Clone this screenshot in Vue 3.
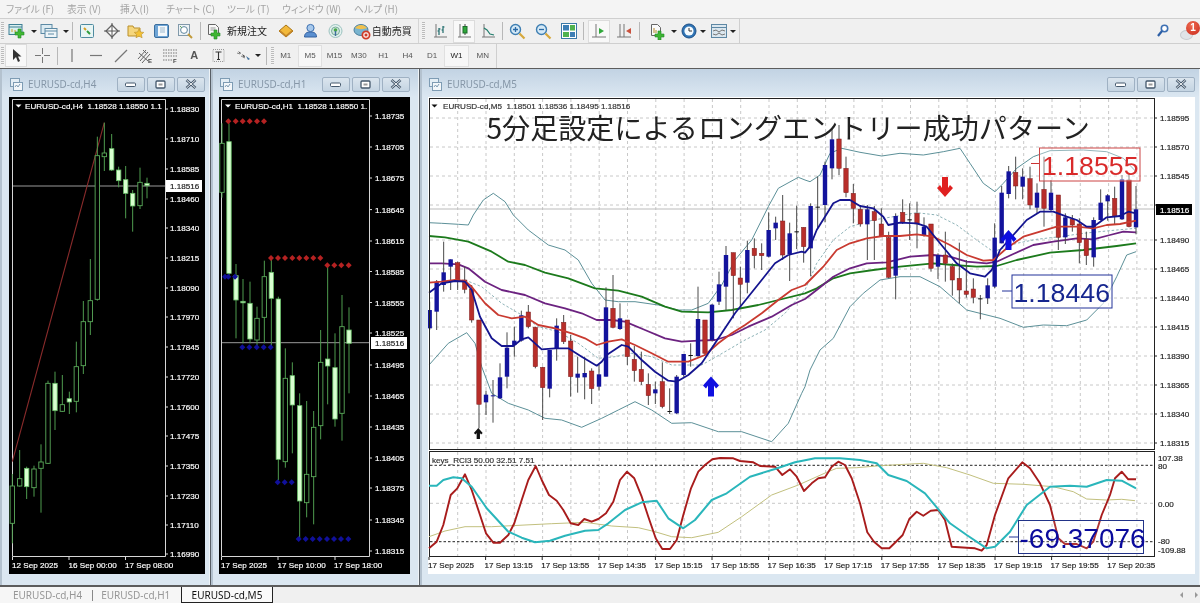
<script setup>
const conv = (ox, oy) => (a) => a.map(([x, y]) => [ox + x / 3, oy + y / 3])
const z8 = conv(425, 100), z9 = conv(800, 100), z10 = conv(425, 445), z11 = conv(810, 445)
const str = (a) => a.map(([x, y]) => x.toFixed(1) + ',' + y.toFixed(1)).join(' ')
const line = (a, b) => str(z8(a).concat(z9(b)))
const sub = (a, b) => str(z10(a).concat(z11(b)))

const blue = line([[12,578],[50,550],[90,543],[120,545],[140,570],[165,650],[200,715],[230,738],[265,738],[290,718],[310,712],[350,748],[390,745],[430,745],[470,770],[515,797],[530,785],[545,765],[590,735],[610,740],[650,780],[690,815],[730,842],[755,845],[790,825],[830,790],[860,745],[890,700],[930,640],[970,590],[1010,540],[1050,490],[1090,465],[1130,455]],
  [[15,458],[30,440],[50,390],[75,350],[100,310],[120,300],[150,300],[180,318],[220,325],[250,350],[265,375],[300,368],[350,370],[380,380],[420,430],[470,490],[510,520],[555,530],[575,510],[600,450],[640,405],[680,360],[720,335],[760,335],[800,350],[830,360],[860,380],[880,380],[920,352],[960,348],[985,335],[1008,340]])
const red = line([[12,548],[50,545],[90,540],[120,543],[140,560],[180,610],[220,645],[260,655],[300,650],[340,675],[390,685],[440,700],[480,715],[515,735],[550,725],[590,718],[630,735],[680,760],[730,785],[790,785],[840,765],[880,730],[920,700],[960,675],[1010,640],[1060,600],[1100,570],[1140,555]],
  [[30,540],[70,500],[110,450],[150,430],[200,415],[250,408],[300,408],[350,403],[400,410],[450,435],[500,465],[550,482],[580,480],[620,445],[670,410],[720,395],[770,380],[830,380],[880,385],[920,375],[960,372],[1008,362]])
const purple = line([[12,490],[50,490],[100,493],[130,505],[180,545],[230,570],[300,585],[360,610],[420,625],[470,640],[515,660],[560,660],[600,665],[660,690],[720,715],[770,725],[820,722],[870,720],[920,705],[970,680],[1040,650],[1100,615],[1140,597]],
  [[50,570],[100,530],[150,505],[200,490],[260,487],[330,470],[400,465],[450,470],[500,485],[560,490],[590,485],[640,462],[700,435],[760,425],[830,415],[880,418],[930,405],[970,395],[1008,397]])
const green = line([[12,408],[60,412],[130,425],[200,455],[250,485],[300,495],[360,518],[430,535],[510,565],[580,572],[650,590],[720,620],[770,635],[850,637],[920,630],[1000,615],[1060,600],[1140,580]],
  [[50,565],[100,535],[150,520],[220,510],[300,500],[400,490],[460,495],[530,500],[590,498],[650,480],[750,458],[850,450],[950,438],[1008,430]])
const upper = line([[12,368],[50,370],[100,373],[130,375],[145,345],[175,300],[205,280],[240,305],[265,345],[310,390],[370,435],[420,450],[460,480],[500,550],[540,600],[580,605],[630,605],[700,615],[760,630],[800,630],[850,610],[890,555],[930,480],[980,420],[1030,320],[1060,265],[1120,232],[1140,240]],
  [[30,245],[60,225],[90,160],[125,145],[180,157],[245,168],[300,160],[370,165],[430,155],[480,145],[510,190],[550,250],[585,275],[610,250],[650,205],[700,170],[750,152],[850,150],[920,155],[970,175],[1008,215]])
const lower = line([[12,795],[70,730],[125,698],[150,730],[170,800],[200,880],[250,910],[310,930],[360,955],[410,960],[470,982],[530,955],[580,930],[630,905],[680,930],[740,970],[800,968],[880,995],[950,995],[1040,1025],[1090,970],[1130,880],[1140,860]],
  [[30,810],[60,750],[100,715],[150,620],[190,580],[240,540],[300,530],[360,530],[420,560],[460,595],[500,630],[600,655],[670,682],[730,675],[800,677],[860,660],[910,610],[950,530],[980,465],[1008,455]])
const midband = line([[120,540],[170,560],[230,610],[290,645],[340,680],[400,695],[460,730],[520,775],[570,770],[620,760],[680,770],[740,795],[830,795],[900,755],[960,720],[1020,690],[1080,640],[1140,570]],
  [[50,490],[100,420],[150,380],[220,360],[280,350],[350,338],[410,345],[470,375],[530,420],[580,455],[650,430],[710,418],[780,410],[850,400],[950,390],[1008,385]])

const rciRed = sub([[12,310],[35,290],[55,240],[77,150],[97,130],[120,88],[140,135],[165,210],[183,265],[205,293],[225,293],[250,270],[268,235],[290,165],[310,105],[332,63],[350,105],[372,150],[395,167],[415,195],[437,235],[460,240],[478,222],[500,230],[520,222],[543,205],[565,170],[585,105],[606,80],[628,100],[650,155],[670,215],[692,280],[712,312],[735,312],[755,285],[775,210],[798,130],[820,80],[840,60],[862,43],[885,39],[925,40],[945,48],[985,52],[1005,63],[1050,65],[1072,90],[1095,73],[1115,95],[1137,138],[1160,115]],
  [[25,100],[45,97],[65,65],[85,50],[105,60],[125,100],[150,175],[172,262],[192,290],[215,310],[238,310],[258,290],[278,270],[298,222],[320,200],[340,212],[362,197],[385,195],[405,225],[425,305],[470,308],[495,310],[515,317],[530,300],[555,210],[595,100],[637,52],[660,70],[690,115],[720,180],[745,280],[765,297],[800,297],[830,310],[850,290],[875,210],[900,150],[915,100],[935,80],[955,103],[978,103]])
const rciTeal = sub([[12,122],[35,122],[55,105],[85,97],[110,100],[140,125],[185,190],[250,260],[290,278],[330,292],[375,287],[420,272],[480,257],[520,255],[550,235],[600,195],[650,172],[695,167],[730,220],[775,250],[810,225],[860,165],[905,145],[975,95],[1050,72],[1110,52]],
  [[15,40],[90,40],[150,45],[200,55],[235,90],[290,108],[345,145],[420,235],[470,270],[530,310],[555,305],[600,260],[650,180],[720,125],[780,122],[830,125],[890,105],[935,107],[978,130]])
const rciKhaki = sub([[12,275],[60,258],[120,245],[200,245],[300,240],[380,236],[480,232],[560,243],[640,248],[690,260],[740,275],[800,278],[880,262],[950,215],[1040,150],[1120,120]],
  [[50,82],[80,70],[140,68],[210,62],[340,55],[410,68],[480,90],[550,115],[640,118],[730,125],[790,140],[830,162],[890,165],[935,163],[975,167]])

// x, bodyTop, bodyBottom, high, low, kind
const c8 = [[14,630,685,605,690,'b'],[35,545,635,540,690,'b'],[56,517,555,425,575,'b'],[77,478,500,478,570,'b'],[98,488,540,485,570,'r'],[119,540,568,500,580,'r'],[140,568,660,555,668,'r'],[162,660,913,660,985,'r'],[183,884,907,872,945,'b'],[204,886,886,840,968,'b'],[225,832,895,790,897,'b'],[246,743,830,697,865,'b'],[268,722,735,680,770,'b'],[289,646,722,632,725,'b'],[310,636,680,615,685,'r'],[331,682,800,680,805,'r'],[353,802,863,800,960,'r'],[374,750,866,750,892,'b'],[395,677,745,655,782,'b'],[416,667,725,645,732,'r'],[437,723,830,705,890,'r'],[458,821,833,770,878,'b'],[479,819,832,770,898,'b'],[500,813,866,805,912,'r'],[522,823,860,795,872,'b'],[543,622,830,562,830,'b'],[564,625,682,525,685,'r'],[585,655,687,610,690,'b'],[607,660,770,660,795,'r'],[628,778,812,738,845,'r'],[649,808,845,755,855,'r'],[670,853,887,820,915,'r'],[691,868,880,845,912,'b'],[712,845,920,787,925,'r'],[734,933,933,865,942,'k'],[755,830,940,825,942,'b'],[776,762,825,762,830,'b'],[797,765,765,730,800,'k'],[819,657,768,560,772,'b'],[840,660,760,660,765,'r'],[861,614,720,612,724,'b'],[882,553,605,515,615,'b'],[903,465,560,438,630,'b'],[925,458,527,458,655,'r'],[946,534,553,500,620,'r'],[967,450,548,422,580,'b'],[988,445,467,415,505,'r'],[1010,460,467,430,510,'r'],[1031,390,470,337,472,'b'],[1052,368,385,350,420,'b'],[1073,363,465,285,480,'r'],[1094,400,462,368,543,'b'],[1115,394,394,317,447,'k'],[1136,382,440,382,488,'r']]
const c9 = [[32,318,445,310,528,'b'],[53,320,320,230,385,'k'],[75,195,315,185,367,'b'],[96,118,205,85,238,'b'],[117,117,205,75,225,'r'],[138,205,278,170,292,'r'],[160,280,325,252,370,'r'],[181,328,372,315,380,'r'],[202,328,373,315,480,'b'],[223,335,362,318,480,'r'],[244,372,408,325,410,'r'],[266,413,532,395,535,'r'],[287,348,527,340,598,'b'],[308,337,368,298,372,'r'],[329,358,358,310,420,'k'],[351,340,372,305,445,'r'],[372,380,405,352,410,'b'],[393,372,505,372,515,'r'],[414,465,500,460,537,'b'],[436,465,490,395,545,'r'],[457,500,540,490,587,'r'],[478,535,570,428,610,'r'],[499,573,583,480,593,'r'],[520,567,592,535,610,'r'],[541,595,595,585,658,'k'],[563,556,595,535,612,'b'],[584,413,560,370,565,'b'],[605,278,430,258,430,'b'],[626,214,282,198,295,'b'],[647,217,258,170,298,'r'],[668,230,260,205,298,'b'],[690,236,315,200,328,'r'],[711,278,323,250,342,'b'],[732,268,325,170,380,'r'],[753,278,330,240,335,'b'],[775,285,412,285,450,'r'],[796,352,412,340,432,'b'],[817,358,375,345,395,'r'],[838,372,428,355,490,'r'],[859,418,467,395,495,'r'],[881,360,472,352,500,'b'],[902,308,360,268,362,'b'],[923,286,304,282,362,'b'],[944,295,350,260,372,'r'],[966,238,358,225,360,'b'],[987,240,380,222,382,'r'],[1008,328,382,258,403,'b']]
const mk = (ox, oy) => (c) => {
  const top = oy + c[1] / 3, bot = oy + c[2] / 3
  return { x: ox + c[0] / 3, top, h: Math.max(bot - top, 1), hi: oy + c[3] / 3, lo: oy + c[4] / 3, k: c[5] }
}
const mainCandles = c8.map(mk(425, 100)).concat(c9.map(mk(800, 100)))

const y4 = (v) => 110 + v / 3, y5 = (v) => 350 + v / 3
const h4 = [[37,y5(408),y5(520),y5(372),y5(580),'h'],[59,y5(386),y5(408),y5(300),y5(410),'h'],[80,y5(355),y5(410),y5(350),y5(447),'s'],[102,y5(357),y5(413),y5(347),y5(440),'h'],[123,y5(336),y5(355),y5(283),y5(488),'h'],[144,y5(100),y5(340),y5(92),y5(342),'h'],[165,y5(100),y5(182),y5(65),y5(240),'s'],[187,y5(164),y5(184),y5(75),y5(186),'h'],[208,y5(146),y5(156),y5(125),y5(192),'s'],[229,y5(50),y5(154),y4(695),y5(187),'h'],[250,y4(635),y5(47),y4(573),y5(72),'h'],[271,y4(572),y4(635),y4(447),y4(675),'h'],[292,y4(137),y4(568),y4(80),y4(572),'h'],[313,y4(129),y4(140),y4(38),y4(183),'h'],[335,y4(116),y4(180),y4(72),y4(183),'s'],[356,y4(180),y4(212),y4(170),y4(232),'s'],[377,y4(209),y4(250),y4(168),y4(325),'s'],[398,y4(250),y4(288),y4(240),y4(365),'s'],[420,y4(217),y4(287),y4(173),y4(297),'h'],[441,y4(220),y4(227),y4(203),y4(265),'s']]
  .map((c) => ({ x: c[0] / 3, top: c[1], h: Math.max(c[2] - c[1], 1.5), hi: c[3], lo: c[4], k: c[5] }))
const h1 = [[36,y4(100),y4(247),y4(40),y4(263),'h'],[57,y4(95),y4(490),y4(40),y4(495),'s'],[78,y4(497),y4(570),y4(462),y4(685),'s'],[99,y4(574),y4(577),y4(507),y4(700),'s'],[120,y4(580),y4(687),y4(515),y4(700),'s'],[141,y4(625),y4(690),y4(590),y4(710),'h'],[163,y4(500),y4(622),y4(452),y4(700),'h'],[184,y4(487),y4(565),y4(450),y4(710),'s'],[205,y4(567),y5(328),y4(560),y5(390),'s'],[226,y5(85),y5(335),y4(715),y5(353),'h'],[247,y5(77),y5(165),y5(37),y5(310),'s'],[269,y5(167),y5(453),y5(130),y5(565),'s'],[290,y5(373),y5(458),y5(153),y5(502),'h'],[311,y5(232),y5(380),y5(183),y5(523),'h'],[332,y5(37),y5(227),y4(660),y5(268),'h'],[353,y5(27),y5(48),y4(470),y5(163),'s'],[375,y5(53),y5(207),y4(670),y5(230),'s'],[396,y4(650),y5(190),y4(555),y5(272),'h'],[417,y4(660),y4(700),y4(592),y5(130),'s']]
  .map((c) => ({ x: 210 + c[0] / 3, top: c[1], h: Math.max(c[2] - c[1], 1.5), hi: c[3], lo: c[4], k: c[5] }))
const dot = (xs, y) => xs.map((x) => ({ x: 210 + x / 3, y }))
const redDots = [...dot([55,77,98,119,141,162], y4(34)), ...dot([183,204,225,247,268,289,310,331], y4(444)), ...dot([352,373,394,416], y4(466))]
const blueDots = [...dot([45,55,75], y4(500)), ...dot([97,118,140,161,182], y4(712)), ...dot([203,224,245], y5(397)), ...dot([266,287,308,329,351,372,393,415], y5(567))]

const h4Prices = [['1.18830',109],['1.18710',139],['1.18585',169],['1.18460',199],['1.18340',228],['1.18215',258],['1.18090',288],['1.17970',317],['1.17845',347],['1.17720',377],['1.17600',407],['1.17475',436],['1.17350',466],['1.17230',496],['1.17110',525],['1.16990',554]]
const h1Prices = [['1.18735',116],['1.18705',147],['1.18675',178],['1.18645',209.6],['1.18615',241],['1.18585',271.5],['1.18555',302.5],['1.18525',333],['1.18495',365],['1.18465',396],['1.18435',427],['1.18405',458],['1.18375',488],['1.18345',520],['1.18315',551]]
const m5Prices = [['1.18595',118],['1.18570',147],['1.18545',176],['1.18490',240],['1.18465',269],['1.18440',298],['1.18415',327],['1.18390',356],['1.18365',385],['1.18340',414],['1.18315',443]]
const m5Grid = [147,176,205,240,269,298,327,356,385,414,443]
const subTimes = ['17 Sep 2025','17 Sep 13:15','17 Sep 13:55','17 Sep 14:35','17 Sep 15:15','17 Sep 15:55','17 Sep 16:35','17 Sep 17:15','17 Sep 17:55','17 Sep 18:35','17 Sep 19:15','17 Sep 19:55','17 Sep 20:35']
  .map((t, i) => ({ t, x: 429 + i * 56.6 }))
const vGrid = Array.from({ length: 25 }, (_, i) => 457.7 + i * 28.3)
const subLabels = [['107.38',458],['80',466],['0.00',504],['-80',541],['-109.88',550]]
const menus = ['ファイル (F)','表示 (V)','挿入(I)','チャート (C)','ツール (T)','ウィンドウ (W)','ヘルプ (H)']
</script>

<template>
  <div class="app">
    <nav class="menu"><span v-for="m in menus" :key="m">{{ m }}</span></nav>

    <div class="row row1">
      <div class="bar bar-a">
        <i class="grip"></i>
        <span class="b dd">
          <svg width="20" height="17" viewBox="0 0 20 17"><rect x="1" y="1.5" width="13" height="10" fill="#d9f0ef" stroke="#3f7f95"/><path d="M1 4h13" stroke="#3f7f95"/><path d="M4 9V6M7 9V7" stroke="#d8a021"/><path d="M10 6h3v3h3v3h-3v3h-3v-3H7V9h3z" fill="#42b833" stroke="#1f8a2a" stroke-width=".6"/></svg>
          <i class="drop"></i>
        </span>
        <span class="b dd">
          <svg width="20" height="17" viewBox="0 0 20 17"><rect x="1" y="1.5" width="11" height="9" fill="#dcebf2" stroke="#5c8aa5"/><rect x="5" y="5.5" width="12" height="9" fill="#eef5f8" stroke="#5c8aa5"/><path d="M5 8h12M8 11h6" stroke="#5c8aa5"/></svg>
          <i class="drop"></i>
        </span>
        <i class="sep"></i>
        <span class="b"><svg width="16" height="16" viewBox="0 0 16 16"><rect x="1.5" y="1.5" width="13" height="13" rx="1" fill="#e8f5f4" stroke="#4e8ba0"/><path d="M5 5l2 2" stroke="#d8a021" stroke-width="2"/><path d="M8 8l3 3" stroke="#2e9c3c" stroke-width="2"/></svg></span>
        <span class="b"><svg width="16" height="16" viewBox="0 0 16 16"><path d="M8 2l6 6-6 6-6-6z" fill="#fff" stroke="#666" stroke-width="1.3"/><path d="M8 0v16M0 8h16" stroke="#555"/></svg></span>
        <span class="b"><svg width="18" height="16" viewBox="0 0 18 16"><path d="M1 3h5l1 2h6v8H1z" fill="#f5d67d" stroke="#b98f2a"/><path d="M12 6l1.5 3 3.3.4-2.4 2.2.7 3.2-3.1-1.7-3 1.7.7-3.2-2.4-2.2 3.3-.4z" fill="#f4c235" stroke="#b98f2a" stroke-width=".6"/></svg></span>
        <span class="b"><svg width="17" height="16" viewBox="0 0 17 16"><rect x="1.5" y="1.5" width="14" height="13" rx="1.5" fill="#6fa5d6" stroke="#3b6f9f"/><rect x="5" y="3" width="9" height="10" fill="#f4f8fb"/><path d="M7 5h5M7 7h5M7 9h5" stroke="#9db9cf"/></svg></span>
        <span class="b"><svg width="17" height="16" viewBox="0 0 17 16"><rect x="1.5" y="1.5" width="11" height="11" fill="#eef3f6" stroke="#8199aa"/><circle cx="7" cy="7" r="3.4" fill="#fff" stroke="#5e86a0"/><path d="M11 11l4 4" stroke="#c29a3a" stroke-width="2"/><path d="M3 3l2 2" stroke="#5fa75f"/></svg></span>
        <i class="sep"></i>
        <span class="tb">
          <svg width="17" height="17" viewBox="0 0 17 17"><path d="M2.5 1.5h7l3 3v7h-10z" fill="#f8f8f8" stroke="#666"/><path d="M4.5 5h5M4.5 7h5" stroke="#999"/><path d="M8 7h3v3h3v3h-3v3H8v-3H5v-3h3z" fill="#3fb533" stroke="#1f8a2a" stroke-width=".6"/></svg>
          新規注文
        </span>
        <span class="b"><svg width="16" height="16" viewBox="0 0 16 16"><path d="M8 2l7 6-7 6-7-6z" fill="#f2b93b" stroke="#a87416"/><path d="M1 8l7 6 7-6-1-1-6 5-6-5z" fill="#c4862a"/></svg></span>
        <span class="b"><svg width="15" height="16" viewBox="0 0 15 16"><circle cx="7.5" cy="5" r="3.6" fill="#a8c9ec" stroke="#3b6fb0"/><path d="M1.5 14c0-4 2.5-5 6-5s6 1 6 5z" fill="#5a8fd0" stroke="#33609f"/></svg></span>
        <span class="b"><svg width="15" height="16" viewBox="0 0 15 16"><circle cx="7.5" cy="8" r="6.5" fill="#e3f1ee" stroke="#9cc3c0"/><circle cx="7.5" cy="8" r="4" fill="#cfe6dd" stroke="#79ad9a"/><circle cx="7.5" cy="7" r="1.8" fill="#4aa84a"/><path d="M7.5 8v5" stroke="#3e6e9e" stroke-width="1.4"/></svg></span>
        <span class="tb tb2">
          <svg width="18" height="17" viewBox="0 0 18 17"><ellipse cx="8" cy="7" rx="7" ry="5.5" fill="#79b4cf" stroke="#4d7f9c"/><path d="M2 5c3-4 9-4 12 0-3 1.5-9 1.5-12 0z" fill="#f1c14d"/><circle cx="13" cy="12" r="3.6" fill="#fff" stroke="#cf3b27" stroke-width="1.8"/><rect x="11.6" y="10.6" width="2.8" height="2.8" fill="#cf3b27"/></svg>
          自動売買
        </span>
      </div>
      <div class="bar bar-b">
        <i class="grip gr2"></i>
        <span class="b b-w"><svg width="15" height="16" viewBox="0 0 15 16"><path d="M1 14h13M3 1v13" stroke="#777"/><path d="M6 5v7M4.5 8H6M6 6h1.5M10 3v7M8.5 7H10M10 4h1.5" stroke="#1f6b6b" stroke-width="1.2"/></svg></span>
        <span class="b b-on"><svg width="15" height="16" viewBox="0 0 15 16"><path d="M1 14h13M3 1v13" stroke="#777"/><path d="M8 1v11" stroke="#444"/><rect x="6" y="3.5" width="4" height="6.5" fill="#2fa83a" stroke="#1c6b2a"/></svg></span>
        <span class="b b-w"><svg width="15" height="16" viewBox="0 0 15 16"><path d="M1 14h13M3 1v13" stroke="#777"/><path d="M3 5l3 2 3 4 4 1" fill="none" stroke="#1f7c6b" stroke-width="1.2"/></svg></span>
        <i class="sep"></i>
        <span class="b b-z"><svg width="17" height="17" viewBox="0 0 17 17"><circle cx="6.5" cy="6.5" r="5" fill="#d5e9f6" stroke="#3f7fb2" stroke-width="1.4"/><path d="M4 6.5h5M6.5 4v5" stroke="#2a6ba8" stroke-width="1.3"/><path d="M10.5 10.5l5 5" stroke="#d6a83c" stroke-width="2.2"/></svg></span>
        <span class="b b-z"><svg width="17" height="17" viewBox="0 0 17 17"><circle cx="6.5" cy="6.5" r="5" fill="#d5e9f6" stroke="#3f7fb2" stroke-width="1.4"/><path d="M4 6.5h5" stroke="#2a6ba8" stroke-width="1.3"/><path d="M10.5 10.5l5 5" stroke="#d6a83c" stroke-width="2.2"/></svg></span>
        <span class="b b-z"><svg width="16" height="16" viewBox="0 0 16 16"><rect x=".5" y=".5" width="15" height="15" fill="#fff" stroke="#3b7aa8"/><rect x="2" y="2" width="6" height="5.5" fill="#3d7fb5"/><rect x="9" y="2" width="5" height="5.5" fill="#4fb24f"/><rect x="2" y="9" width="6" height="5" fill="#4fb24f"/><rect x="9" y="9" width="5" height="5" fill="#3d7fb5"/></svg></span>
        <i class="sep"></i>
        <span class="b b-on b-n"><svg width="15" height="16" viewBox="0 0 15 16"><path d="M0 14h14M4 1v13" stroke="#777"/><path d="M7 5l5 3-5 3z" fill="#2fa83a"/></svg></span>
        <span class="b b-s"><svg width="15" height="16" viewBox="0 0 15 16"><path d="M0 14h14M3 1v13M7 1v13" stroke="#777"/><path d="M14 5l-5 3 5 3z" fill="#c9503c"/></svg></span>
        <i class="sep"></i>
        <span class="b dd d2">
          <svg width="19" height="17" viewBox="0 0 19 17"><path d="M2.5 1.5h6l3 3v8h-9z" fill="#fafafa" stroke="#666"/><path d="M5 5v5M7 7v3" stroke="#b58a2a"/><path d="M9 8h3v3h3v3h-3v3H9v-3H6v-3h3z" fill="#3fb533" stroke="#1f8a2a" stroke-width=".6"/></svg>
          <i class="drop"></i>
        </span>
        <span class="b dd d3">
          <svg width="16" height="16" viewBox="0 0 16 16"><circle cx="8" cy="8" r="7" fill="#2f74b5" stroke="#1d4f86"/><circle cx="8" cy="8" r="4.6" fill="#f5fbff"/><path d="M8 5v3h3" stroke="#333" fill="none"/></svg>
          <i class="drop"></i>
        </span>
        <span class="b dd d4">
          <svg width="16" height="14" viewBox="0 0 16 14"><rect x=".5" y=".5" width="15" height="13" fill="#dbe7ef" stroke="#5d87a4"/><path d="M.5 3.5h15" stroke="#5d87a4"/><path d="M2 7l3-1 3 2 3-2 3 1M2 10l3 1 3-2 3 2 3-1" fill="none" stroke="#777"/></svg>
          <i class="drop"></i>
        </span>
      </div>
      <div class="notify">
        <svg width="12" height="14" viewBox="0 0 12 14"><circle cx="7.5" cy="4.5" r="3.2" fill="#fff" stroke="#3d70b3" stroke-width="1.6"/><path d="M5 7l-4 5" stroke="#2d5fa6" stroke-width="2.2"/></svg>
        <span class="bubble"><i class="cloud"></i><b>1</b></span>
      </div>
    </div>

    <div class="row row2">
      <i class="grip"></i>
      <span class="b b-on cur"><svg width="11" height="15" viewBox="0 0 11 15"><path d="M2 1v11l3-3 2 5 2-1-2-4.5h3.500z" fill="#333"/></svg></span>
      <span class="b b-m"><svg width="15" height="15" viewBox="0 0 15 15"><path d="M7.500 0v6M7.500 9v6M0 7.500h6M9 7.500h6" stroke="#777"/></svg></span>
      <i class="sep"></i>
      <span class="b b-m"><svg width="14" height="15" viewBox="0 0 14 15"><path d="M7 1v13" stroke="#777" stroke-width="1.2"/></svg></span>
      <span class="b b-m"><svg width="14" height="15" viewBox="0 0 14 15"><path d="M1 7.500h12" stroke="#777" stroke-width="1.2"/></svg></span>
      <span class="b b-m"><svg width="14" height="15" viewBox="0 0 14 15"><path d="M1 14L13 2" stroke="#777" stroke-width="1.2"/></svg></span>
      <span class="b b-m"><svg width="16" height="16" viewBox="0 0 16 16"><path d="M1 11l8-9M3 13l8-9M5 15l8-9M2 5l9 8M6 2l3 3" stroke="#666"/><text x="11" y="15" class="tiny">E</text></svg></span>
      <span class="b b-m"><svg width="16" height="16" viewBox="0 0 16 16"><path d="M1 2h14M1 5h14M1 8h14M1 12h9" stroke="#777" stroke-dasharray="1.500 1"/><text x="11" y="15" class="tiny">F</text></svg></span>
      <span class="b b-m ltr">A</span>
      <span class="b b-m"><svg width="13" height="15" viewBox="0 0 13 15"><rect x="1" y="1.500" width="11" height="12" fill="none" stroke="#999" stroke-dasharray="1 1"/><path d="M3.500 4h6M6.500 4v7.500M5 11.500h3" stroke="#333" stroke-width="1.100"/></svg></span>
      <span class="b dd d5">
        <svg width="16" height="13" viewBox="0 0 16 13"><path d="M2 2l3 2-1 1zM6 5l3 2-1 2z" fill="#444"/><path d="M10 7l4 3-2 1z" fill="#3f6f9c"/><path d="M1 4l3 1M5 7l4 2" stroke="#888"/></svg>
        <i class="drop"></i>
      </span>
      <i class="sep s2"></i>
      <i class="grip gr3"></i>
      <span class="tf">M1</span><span class="tf on">M5</span><span class="tf">M15</span><span class="tf">M30</span><span class="tf">H1</span><span class="tf">H4</span><span class="tf">D1</span><span class="tf on dk">W1</span><span class="tf mn">MN</span>
    </div>

    <main class="mdi">
      <section class="win w1">
        <header class="title">
          <svg class="wi" width="13" height="13" viewBox="0 0 13 13"><rect x=".5" y=".5" width="9" height="8" fill="#e4eef5" stroke="#7e9cb4"/><rect x="3.500" y="4.500" width="9" height="8" fill="#f3f7fa" stroke="#7e9cb4"/><path d="M5 9l1.500-2 1.500 2 2-3" stroke="#7e9cb4" fill="none"/></svg>
          <span class="tt">EURUSD-cd,H4</span>
          <span class="wb"><svg width="12" height="8" viewBox="0 0 12 8"><rect x=".5" y="3" width="10" height="3.500" rx="1" fill="#fff" stroke="#44586c"/></svg></span>
          <span class="wb"><svg width="12" height="9" viewBox="0 0 12 9"><rect x="1" y="1" width="9" height="7" rx="1" fill="#fff" stroke="#44586c" stroke-width="1.300"/><rect x="3.500" y="3.500" width="4" height="2" fill="#999"/></svg></span>
          <span class="wb"><svg width="12" height="10" viewBox="0 0 12 10"><path d="M1.500 1l9 8M10.500 1l-9 8" stroke="#44586c" stroke-width="2.600"/><path d="M1.500 1l9 8M10.500 1l-9 8" stroke="#fff" stroke-width=".9"/></svg></span>
        </header>
        <svg class="chart" width="196" height="477" viewBox="9 97 196 477">
          <rect x="9" y="97" width="196" height="477" fill="#000"/>
          <path d="M12.500 99.500H165.500V556.500H12.500Z" fill="none" stroke="#eee" stroke-width=".9"/>
          <line x1="13" y1="186" x2="165" y2="186" stroke="#9a9a9a"/>
          <line x1="12.300" y1="461.700" x2="104.300" y2="122.700" stroke="#8a2b2b" stroke-width="1.100"/>
          <g v-for="c in h4" :key="c.x">
            <line :x1="c.x" :x2="c.x" :y1="c.hi" :y2="c.lo" class="gw"/>
            <rect :x="c.x - 2.2" :y="c.top" width="4.400" :height="c.h" :class="c.k === 's' ? 'gs' : 'gh'"/>
          </g>
          <g v-for="p in h4Prices" :key="p[0]">
            <line x1="165" x2="168" :y1="p[1]" :y2="p[1]" stroke="#ddd"/>
            <text x="170" :y="p[1] + 3" class="t w">{{ p[0] }}</text>
          </g>
          <rect x="166" y="180" width="36" height="12" fill="#fff"/>
          <text x="170" y="189" class="t k">1.18516</text>
          <path d="M15.500 104.500h6l-3 3z" fill="#fff"/>
          <text x="25" y="109" class="t w">EURUSD-cd,H4&nbsp;&nbsp;1.18528 1.18550 1.1</text>
          <path d="M12.500 557v3M69 557v3M125.500 557v3" stroke="#ddd"/>
          <text x="12" y="568" class="t w">12 Sep 2025</text>
          <text x="68.500" y="568" class="t w">16 Sep 00:00</text>
          <text x="125" y="568" class="t w">17 Sep 08:00</text>
        </svg>
      </section>

      <section class="win w2">
        <header class="title">
          <svg class="wi" width="13" height="13" viewBox="0 0 13 13"><rect x=".5" y=".5" width="9" height="8" fill="#e4eef5" stroke="#7e9cb4"/><rect x="3.500" y="4.500" width="9" height="8" fill="#f3f7fa" stroke="#7e9cb4"/><path d="M5 9l1.500-2 1.500 2 2-3" stroke="#7e9cb4" fill="none"/></svg>
          <span class="tt">EURUSD-cd,H1</span>
          <span class="wb"><svg width="12" height="8" viewBox="0 0 12 8"><rect x=".5" y="3" width="10" height="3.500" rx="1" fill="#fff" stroke="#44586c"/></svg></span>
          <span class="wb"><svg width="12" height="9" viewBox="0 0 12 9"><rect x="1" y="1" width="9" height="7" rx="1" fill="#fff" stroke="#44586c" stroke-width="1.300"/><rect x="3.500" y="3.500" width="4" height="2" fill="#999"/></svg></span>
          <span class="wb"><svg width="12" height="10" viewBox="0 0 12 10"><path d="M1.500 1l9 8M10.500 1l-9 8" stroke="#44586c" stroke-width="2.600"/><path d="M1.500 1l9 8M10.500 1l-9 8" stroke="#fff" stroke-width=".9"/></svg></span>
        </header>
        <svg class="chart" width="191" height="477" viewBox="219 97 191 477">
          <rect x="219" y="97" width="191" height="477" fill="#000"/>
          <path d="M221.500 99.500H369.500V556.500H221.500Z" fill="none" stroke="#eee" stroke-width=".9"/>
          <line x1="222" y1="342.700" x2="369" y2="342.700" stroke="#9a9a9a"/>
          <g v-for="c in h1" :key="c.x">
            <line :x1="c.x" :x2="c.x" :y1="c.hi" :y2="c.lo" class="gw"/>
            <rect :x="c.x - 2.2" :y="c.top" width="4.400" :height="c.h" :class="c.k === 's' ? 'gs' : 'gh'"/>
          </g>
          <path v-for="d in redDots" :key="'r' + d.x + d.y" :d="`M${d.x} ${d.y - 3}l3 3-3 3-3-3z`" fill="#b52222"/>
          <path v-for="d in blueDots" :key="'b' + d.x + d.y" :d="`M${d.x} ${d.y - 3}l3 3-3 3-3-3z`" fill="#10109a"/>
          <g v-for="p in h1Prices" :key="p[0]">
            <line x1="369" x2="372" :y1="p[1]" :y2="p[1]" stroke="#ddd"/>
            <text x="375" :y="p[1] + 3" class="t w">{{ p[0] }}</text>
          </g>
          <rect x="371" y="337" width="36" height="12" fill="#fff"/>
          <text x="375" y="346" class="t k">1.18516</text>
          <path d="M225 104.500h6l-3 3z" fill="#fff"/>
          <text x="235" y="109" class="t w">EURUSD-cd,H1&nbsp;&nbsp;1.18528 1.18550 1.</text>
          <path d="M221.500 557v3M278 557v3M335 557v3" stroke="#ddd"/>
          <text x="221" y="568" class="t w">17 Sep 2025</text>
          <text x="277.500" y="568" class="t w">17 Sep 10:00</text>
          <text x="334" y="568" class="t w">17 Sep 18:00</text>
        </svg>
      </section>

      <section class="win w3">
        <header class="title">
          <svg class="wi" width="13" height="13" viewBox="0 0 13 13"><rect x=".5" y=".5" width="9" height="8" fill="#e4eef5" stroke="#7e9cb4"/><rect x="3.500" y="4.500" width="9" height="8" fill="#f3f7fa" stroke="#7e9cb4"/><path d="M5 9l1.500-2 1.500 2 2-3" stroke="#7e9cb4" fill="none"/></svg>
          <span class="tt">EURUSD-cd,M5</span>
          <span class="wb"><svg width="12" height="8" viewBox="0 0 12 8"><rect x=".5" y="3" width="10" height="3.500" rx="1" fill="#fff" stroke="#44586c"/></svg></span>
          <span class="wb"><svg width="12" height="9" viewBox="0 0 12 9"><rect x="1" y="1" width="9" height="7" rx="1" fill="#fff" stroke="#44586c" stroke-width="1.300"/><rect x="3.500" y="3.500" width="4" height="2" fill="#999"/></svg></span>
          <span class="wb"><svg width="12" height="10" viewBox="0 0 12 10"><path d="M1.500 1l9 8M10.500 1l-9 8" stroke="#44586c" stroke-width="2.600"/><path d="M1.500 1l9 8M10.500 1l-9 8" stroke="#fff" stroke-width=".9"/></svg></span>
        </header>
        <svg class="chart" width="767" height="477" viewBox="428 97 767 477">
          <rect x="428" y="97" width="767" height="477" fill="#fff"/>
          <line v-for="x in vGrid" :key="'v' + x" :x1="x" :x2="x" y1="99" y2="449" class="grid"/>
          <line v-for="y in m5Grid" :key="'h' + y" x1="430" x2="1154" :y1="y" :y2="y" class="grid"/>
          <line x1="430" x2="1154" y1="118" y2="118" class="grid"/>
          <line x1="430" x2="1154" y1="209" y2="209" stroke="#bbb"/>
          <polyline :points="upper" class="band"/>
          <polyline :points="lower" class="band"/>
          <polyline :points="midband" class="band mid"/>
          <polyline :points="green" class="ma" stroke="#1c7a1c"/>
          <polyline :points="purple" class="ma" stroke="#6c2280"/>
          <g v-for="c in mainCandles" :key="c.x">
            <line :x1="c.x" :x2="c.x" :y1="c.hi" :y2="c.lo" class="cw"/>
            <rect :x="c.x - 2.2" :y="c.top" width="4.400" :height="c.h" :class="'c' + c.k"/>
          </g>
          <polyline :points="red" class="ma" stroke="#c93a30"/>
          <polyline :points="blue" class="ma" stroke="#14148f"/>
          <polygon points="0,-10 8,-1 5,2 3,-1 3,10 -3,10 -3,-1 -5,2 -8,-1" transform="translate(711 386.5)" fill="#0f0fe0"/>
          <polygon points="0,-10 8,-1 5,2 3,-1 3,10 -3,10 -3,-1 -5,2 -8,-1" transform="translate(1008.5 240)" fill="#0f0fe0"/>
          <polygon points="0,-10 8,-1 5,2 3,-1 3,10 -3,10 -3,-1 -5,2 -8,-1" transform="translate(945 187) scale(1 -1)" fill="#e02020"/>
          <polygon points="0,-10 8,-1 5,2 3,-1 3,10 -3,10 -3,-1 -5,2 -8,-1" transform="translate(478.3 433.5) scale(.55)" fill="#111"/>
          <rect x="429.500" y="98.500" width="725" height="351" fill="none" stroke="#222"/>
          <rect x="429.500" y="451.500" width="725" height="105" fill="none" stroke="#222"/>
          <g v-for="p in m5Prices" :key="p[0]">
            <line x1="1154" x2="1157" :y1="p[1]" :y2="p[1]" stroke="#222"/>
            <text x="1160" :y="p[1] + 3" class="t k">{{ p[0] }}</text>
          </g>
          <line x1="1154" x2="1157" y1="205" y2="205" stroke="#222"/>
          <rect x="1156" y="204" width="36" height="11" fill="#000"/>
          <text x="1160" y="212.500" class="t w">1.18516</text>
          <path d="M431.500 104.500h6l-3 3z" fill="#111"/>
          <text x="443" y="109" class="t dk">EURUSD-cd,M5&nbsp;&nbsp;1.18501 1.18536 1.18495 1.18516</text>
          <text x="486.500" y="138.500" class="headline">5分足設定によるロングエントリー成功パターン</text>

          <path d="M1031 163.500h8" stroke="#c33"/>
          <rect x="1039.500" y="148" width="100.500" height="33" fill="#fff" fill-opacity=".35" stroke="#c44"/>
          <text x="1042" y="175" class="lab lr">1.18555</text>
          <path d="M1002 291h10" stroke="#223399"/>
          <rect x="1012" y="275" width="100" height="33" fill="#fff" fill-opacity=".6" stroke="#223399"/>
          <text x="1013.500" y="301.500" class="lab lb">1.18446</text>

          <line v-for="x in vGrid" :key="'sv' + x" :x1="x" :x2="x" y1="452" y2="556" class="grid"/>
          <line x1="430" x2="1154" y1="503.300" y2="503.300" class="grid"/>
          <line x1="430" x2="1154" y1="465.300" y2="465.300" class="lvl"/>
          <line x1="430" x2="1154" y1="541.700" y2="541.700" class="lvl"/>
          <polyline :points="rciKhaki" class="rk"/>
          <polyline :points="rciRed" class="rr"/>
          <polyline :points="rciTeal" class="rt"/>
          <text x="432" y="463" class="t dk">keys_RCI3 50.00 32.51 7.51</text>
          <g v-for="p in subLabels" :key="p[0]">
            <text x="1158" :y="p[1] + 3" class="t k">{{ p[0] }}</text>
          </g>
          <path d="M1009 537h9" stroke="#223399"/>
          <rect x="1018.500" y="520.500" width="125" height="33" fill="#fff" fill-opacity=".1" stroke="#223388"/>
          <text x="1019.500" y="548" class="lab ln">-69.37076</text>

          <g v-for="s in subTimes" :key="s.t">
            <line :x1="s.x" :x2="s.x" y1="557" y2="560" stroke="#222"/>
            <text :x="s.x - 1" y="568" class="t k">{{ s.t }}</text>
          </g>
        </svg>
      </section>
    </main>

    <footer class="tabs">
      <div class="tab-list">
        <span class="tab">EURUSD-cd,H4</span><i class="tab-sep"></i><span class="tab">EURUSD-cd,H1</span>
      </div>
      <span class="tab active">EURUSD-cd,M5</span>
      <span class="scroll"><i class="ar al"></i><i class="ar arr"></i></span>
    </footer>
  </div>
</template>

<style>
html, body { margin: 0; padding: 0; background: #f0f0f0; overflow: hidden; }
</style>

<style scoped>
.app { width: 1200px; height: 603px; overflow: hidden; display: flex; flex-direction: column; background: #f0f0f0; font-family: "Liberation Sans", "Noto Sans CJK JP", sans-serif; filter: blur(.3px); }
i { display: block; font-style: normal; }
.menu { height: 19px; box-sizing: border-box; padding: 3px 0 0 6px; display: grid; grid-template-columns: 61px 53px 46px 61px 55px 72px 60px; font: 9.8px/12px "Noto Sans CJK JP", sans-serif; font-feature-settings: "palt"; color: #a4a4a4; background: #f4f4f4; border-bottom: 1px solid #cfcfcf; white-space: nowrap; flex: none; }
.row { display: flex; align-items: center; box-sizing: border-box; flex: none; }
.row1 { height: 25px; border-bottom: 1px solid #cfcfcf; }
.row2 { height: 24px; width: 497px; border-right: 1px solid #cfcfcf; padding-bottom: 1px; }
.bar { display: flex; align-items: center; height: 100%; }
.bar-a { width: 419px; border-right: 1px solid #d5d5d5; box-sizing: border-box; flex: none; }
.bar-b { width: 321px; border-right: 1px solid #cfcfcf; box-sizing: border-box; flex: none; }
.grip { width: 3px; height: 18px; margin: 0 1px 0 1px; background: repeating-linear-gradient(#bbb 0 1px, #f4f4f4 1px 2px); flex: none; }
.gr2 { margin: 0 3px 0 3px; }
.gr3 { margin: 0 0 0 2px; }
.b { width: 24.6px; height: 22px; display: flex; align-items: center; justify-content: center; flex: none; box-sizing: border-box; }
.b svg { display: block; flex: none; }
.dd { width: 32.5px; gap: 1px; padding-left: 2px; }
.drop { width: 0; height: 0; border-left: 3px solid transparent; border-right: 3px solid transparent; border-top: 3px solid #222; margin-left: 2px; }
.sep { width: 1px; height: 18px; background: #b8b8b8; margin: 0 2px; flex: none; }
.tb { width: 68px; display: flex; align-items: center; gap: 4px; font: 10px/12px "Noto Sans CJK JP", sans-serif; color: #222; margin-left: 3px; flex: none; white-space: nowrap; }
.tb2 { width: 62px; margin-left: 5px; gap: 1px; }
.b-w { width: 24px; }
.b-on { width: 22px; height: 23px; background: #f8f8f8; border: 1px solid #dcdcdc; margin: 0 1px; }
.b-n { margin-left: 2px; }
.b-s { width: 26px; }
.b-z { width: 25px; margin-left: .4px; }
.d2 { width: 33px; margin-left: 3px; }
.d3 { width: 28px; }
.d4 { width: 33px; }
.notify { margin-left: auto; display: flex; align-items: center; gap: 11px; }
.bubble { width: 20px; height: 20px; display: block; position: relative; }
.cloud { width: 11px; height: 8px; border-radius: 50%; background: #e0e4e8; border: 1px solid #c8ccd0; margin: 9px 0 0 0; }
.bubble b { position: absolute; right: 0; top: 0; width: 14px; height: 14px; border-radius: 50%; background: radial-gradient(circle at 40% 30%, #ee6a50, #c92a1c); color: #fff; font: bold 10px/14px "Liberation Sans", sans-serif; text-align: center; }
.cur { margin: 0 3px 0 0; }
.b-m { width: 24.5px; }
.ltr { font: bold 11px/1 "Liberation Sans", sans-serif; color: #555; }
.tiny { font: bold 6px "Liberation Sans", sans-serif; fill: #444; }
.s2 { margin-left: 2px; margin-right: 2px; }
.tf { width: 24.4px; height: 22px; font: 8px/22px "Liberation Sans", sans-serif; color: #555; text-align: center; flex: none; box-sizing: border-box; }
.tf.on { background: #f7f7f7; border: 1px solid #e0e0e0; line-height: 20px; }
.tf.dk { color: #222; }
.tf.mn { margin-left: 2px; }
.mdi { height: 517px; display: flex; gap: 1px; background: #585f66; border-top: 1px solid #5d5d5d; box-sizing: border-box; flex: none; }
.win { box-sizing: border-box; display: flex; flex-direction: column; background: linear-gradient(#c2d3e3, #dbe7f1 28px); flex: none; box-shadow: inset 2px 0 #b4c2cf, inset -1px 0 #eef3f7; }
.w1 { width: 210px; padding: 0 5px 0 9px; }
.w2 { width: 208px; padding: 0 9px 0 8px; }
.w3 { width: 780px; padding: 0 5px 0 8px; }
.title { height: 28px; display: flex; align-items: center; flex: none; padding-top: 2px; box-sizing: border-box; }
.wi { margin: 0 5px 0 1px; flex: none; }
.tt { font: 9.9px "Noto Sans", sans-serif; color: #8697a8; flex: 1; white-space: nowrap; }
.wb { width: 28px; height: 15px; margin-left: 2px; display: flex; align-items: center; justify-content: center; box-sizing: border-box; border: 1px solid #9fb1c3; border-radius: 2px; background: linear-gradient(#dbe5ee, #c4d4e2); flex: none; }
.chart { display: block; flex: none; }
.t { font: 8.1px "Liberation Sans", sans-serif; stroke-width: .18; }
.w { fill: #fff; stroke: #fff; }
.k { fill: #222; stroke: #222; }
.dk { fill: #333; stroke: #333; }
.gw { stroke: #4f9c4f; stroke-width: 1; }
.gs { fill: #d8ffd0; stroke: #66bb66; stroke-width: .8; }
.gh { fill: #000; stroke: #5aaa5a; stroke-width: .9; }
.grid { stroke: #c8c8c8; stroke-width: 1; stroke-dasharray: 3 3; }
.band { fill: none; stroke: #5c9098; stroke-width: 1; }
.mid { stroke-width: .7; stroke-dasharray: 2.5 2; }
.ma { fill: none; stroke-width: 1.8; stroke-linejoin: round; }
.cw { stroke: #4a4a4a; stroke-width: 1; }
.cb { fill: #13139c; }
.cr { fill: #b82e2a; stroke: #7c1f1f; stroke-width: .5; }
.ck { fill: #111; }
.headline { font: 400 28.1px "Noto Sans CJK JP", sans-serif; fill: #222; }
.lab { font: 26.7px "Liberation Sans", sans-serif; }
.lr { fill: #d92a2a; }
.lb { fill: #16268f; }
.ln { fill: #0a0a9c; font-size: 28px; }
.lvl { stroke: #222; stroke-width: 1; stroke-dasharray: 2.5 2; }
.rk { fill: none; stroke: #c2c07e; stroke-width: 1; }
.rr { fill: none; stroke: #a81c1c; stroke-width: 1.9; stroke-linejoin: round; }
.rt { fill: none; stroke: #2ab6bb; stroke-width: 2; stroke-linejoin: round; }
.tabs { height: 18px; display: flex; align-items: stretch; background: #f0f0f0; border-top: 2px solid #5c5c5c; box-sizing: border-box; flex: none; }
.tab-list { width: 181px; display: flex; align-items: center; background: #f6f6f6; box-sizing: border-box; padding-left: 13px; flex: none; }
.tab { font: 10px/16px "Noto Sans", sans-serif; color: #979797; white-space: nowrap; }
.tab-sep { width: 1px; height: 11px; background: #888; margin: 0 8px 0 10px; }
.active { width: 92px; box-sizing: border-box; text-align: center; color: #111; background: #fafafa; border: 1px solid #222; border-top: 0; }
.scroll { margin-left: auto; display: flex; align-items: center; gap: 12px; padding-right: 2px; }
.ar { width: 0; height: 0; border-top: 3px solid transparent; border-bottom: 3px solid transparent; }
.al { border-right: 3px solid #999; }
.arr { border-left: 3px solid #999; }
</style>
